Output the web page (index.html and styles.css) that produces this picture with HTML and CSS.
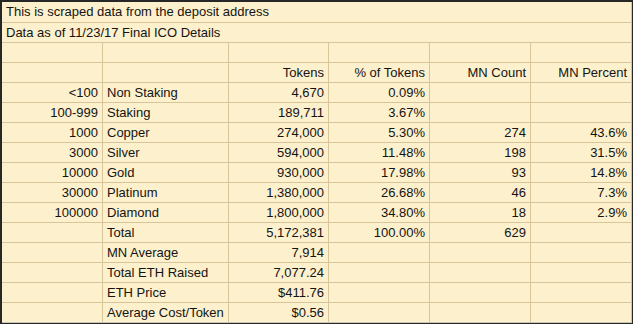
FILE: index.html
```html
<!DOCTYPE html>
<html>
  <head>
    <meta name="viewport" content="width=device-width, initial-scale=1.0" />
    <link rel="stylesheet" href="styles.css">
  </head>
  <body>
    <div class="sheet">
      <div class="cell wide first">This is scraped data from the deposit address</div>
      <div class="cell wide">Data as of 11/23/17 Final ICO Details</div>

      <div class="cell"></div><div class="cell"></div><div class="cell"></div>
      <div class="cell"></div><div class="cell"></div><div class="cell"></div>

      <div class="cell"></div><div class="cell"></div>
      <div class="cell num">Tokens</div>
      <div class="cell num">% of Tokens</div>
      <div class="cell num">MN Count</div>
      <div class="cell num">MN Percent</div>

      <div class="cell num">&lt;100</div><div class="cell">Non Staking</div>
      <div class="cell num">4,670</div><div class="cell num">0.09%</div>
      <div class="cell"></div><div class="cell"></div>

      <div class="cell num">100-999</div><div class="cell">Staking</div>
      <div class="cell num">189,711</div><div class="cell num">3.67%</div>
      <div class="cell"></div><div class="cell"></div>

      <div class="cell num">1000</div><div class="cell">Copper</div>
      <div class="cell num">274,000</div><div class="cell num">5.30%</div>
      <div class="cell num">274</div><div class="cell num">43.6%</div>

      <div class="cell num">3000</div><div class="cell">Silver</div>
      <div class="cell num">594,000</div><div class="cell num">11.48%</div>
      <div class="cell num">198</div><div class="cell num">31.5%</div>

      <div class="cell num">10000</div><div class="cell">Gold</div>
      <div class="cell num">930,000</div><div class="cell num">17.98%</div>
      <div class="cell num">93</div><div class="cell num">14.8%</div>

      <div class="cell num">30000</div><div class="cell">Platinum</div>
      <div class="cell num">1,380,000</div><div class="cell num">26.68%</div>
      <div class="cell num">46</div><div class="cell num">7.3%</div>

      <div class="cell num">100000</div><div class="cell">Diamond</div>
      <div class="cell num">1,800,000</div><div class="cell num">34.80%</div>
      <div class="cell num">18</div><div class="cell num">2.9%</div>

      <div class="cell"></div><div class="cell">Total</div>
      <div class="cell num">5,172,381</div><div class="cell num">100.00%</div>
      <div class="cell num">629</div><div class="cell"></div>

      <div class="cell"></div><div class="cell">MN Average</div>
      <div class="cell num">7,914</div><div class="cell"></div>
      <div class="cell"></div><div class="cell"></div>

      <div class="cell"></div><div class="cell">Total ETH Raised</div>
      <div class="cell num">7,077.24</div><div class="cell"></div>
      <div class="cell"></div><div class="cell"></div>

      <div class="cell"></div><div class="cell">ETH Price</div>
      <div class="cell num">$411.76</div><div class="cell"></div>
      <div class="cell"></div><div class="cell"></div>

      <div class="cell"></div><div class="cell">Average Cost/Token</div>
      <div class="cell num">$0.56</div><div class="cell"></div>
      <div class="cell"></div><div class="cell"></div>
    </div>
  </body>
</html>
```

FILE: styles.css
```css
:root {
  --frame: #272727;
  --paper: #fdf0cc;
  --grid-line: #d8c59a;
  --bottom-line: #c9c6b8;
  --ink: #141414;
}

* {
  box-sizing: border-box;
  margin: 0;
  padding: 0;
}

body {
  background: var(--frame);
  font-family: "Liberation Sans", Arial, sans-serif;
  font-size: 13px;
  color: var(--ink);
  height: 324px;
  overflow: hidden;
}

.sheet {
  margin: 2px 0 0 2px;
  width: 630px;
  display: grid;
  grid-template-columns: 100px 125px 99px 100px 100px 100px;
  grid-template-rows: 20px;
  grid-auto-rows: 19px;
  gap: 1px;
  padding: 0 1px 0 0;
  background: var(--grid-line);
  border-bottom: 1px solid var(--bottom-line);
}

.cell {
  background: var(--paper);
  padding: 0 4px;
  line-height: 19px;
  white-space: nowrap;
  overflow: hidden;
}

.cell.wide {
  grid-column: 1 / -1;
}

.cell.first {
  line-height: 20px;
}

.num {
  text-align: right;
}
```
